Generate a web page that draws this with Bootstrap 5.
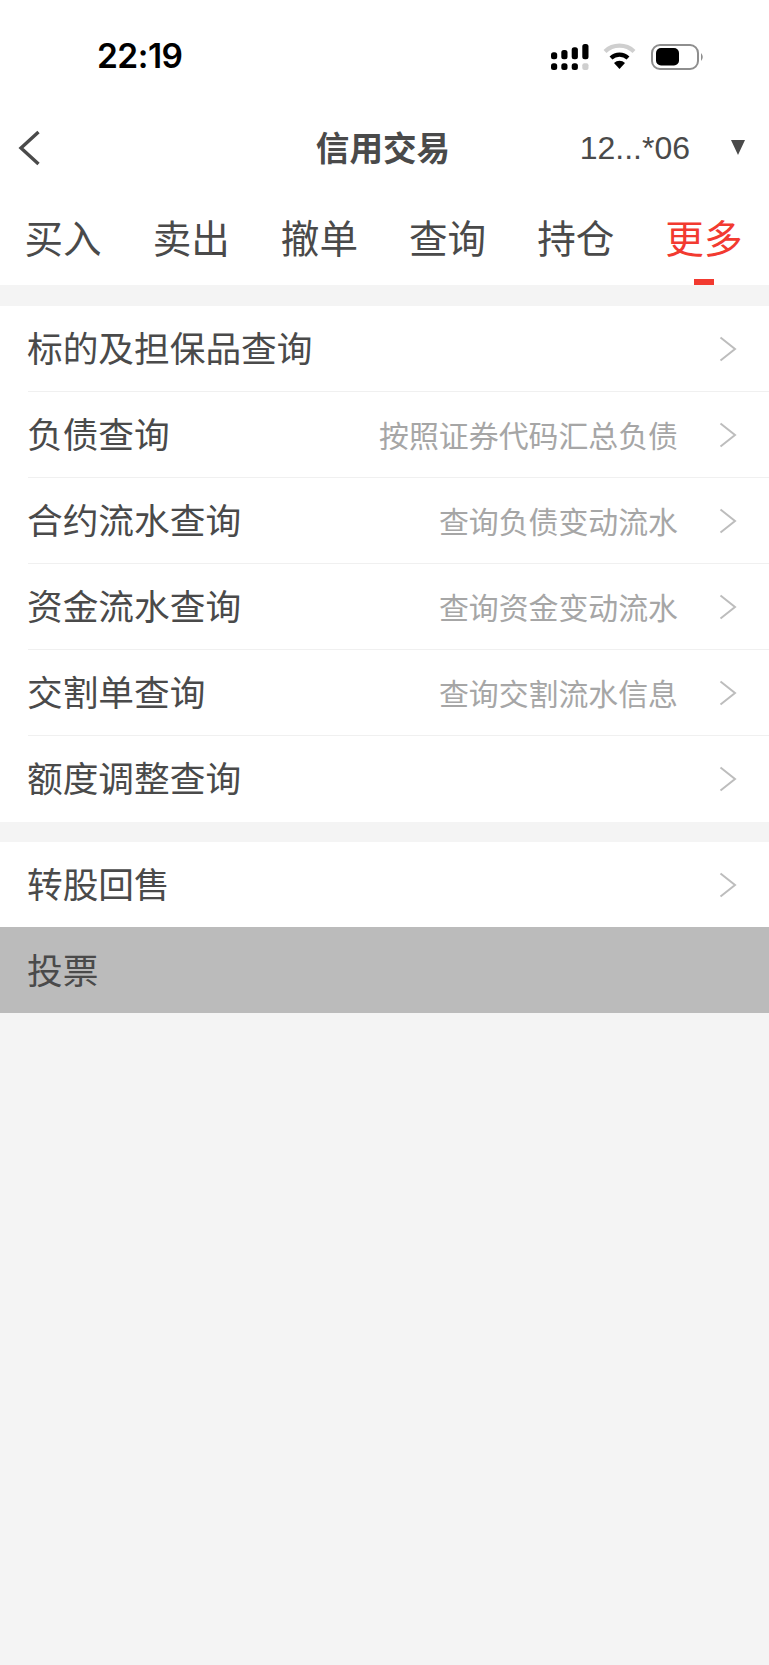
<!DOCTYPE html>
<html lang="zh-CN">
<head>
  <meta charset="utf-8" />
  <meta name="viewport" content="width=device-width, initial-scale=1" />
  <title>信用交易</title>
  <link href="https://cdn.jsdelivr.net/npm/bootstrap@5.3.3/dist/css/bootstrap.min.css" rel="stylesheet" />
  <style>
    body {
      background: #f4f4f4;
      color: #4a4a4a;
      font-family: "Noto Sans CJK SC", "Liberation Sans", sans-serif;
      min-height: 1665px;
    }
    .status-bar { height: 100px; padding: 0 65px 0 97px; }
    .status-time { font: 600 33.5px/1 Inter, "Liberation Sans", sans-serif; color: #000; margin-top: 14px; letter-spacing: -.5px; }
    .status-icons { margin-top: 14px; display: block; }
    .top-bar { height: 95px; padding: 0 24px 0 18px; }
    .top-side { flex: 1 1 0; }
    .top-title { font-size: 33.6px; font-weight: 700; line-height: 1; margin: -2px 0 0 3px; }
    .account { font: 400 32px/1 "Liberation Sans", sans-serif; margin-right: 41px; }
    .drop-mark { width: 0; height: 0; border-left: 7px solid transparent; border-right: 7px solid transparent; border-top: 15px solid #4a4a4a; }
    .trade-tabs { height: 90px; }
    .trade-tabs .nav-link {
      color: #4a4a4a;
      font-size: 38.6px;
      line-height: 1;
      padding: 22px 2px 0 0;
      height: 90px;
      position: relative;
    }
    .trade-tabs .nav-link.active { color: #f23a30; }
    .trade-tabs .nav-link.active::after {
      content: "";
      position: absolute;
      left: 50%;
      bottom: 0;
      width: 20px;
      height: 6px;
      margin-left: -11px;
      background: #f23a30;
    }
    .menu-group { margin-top: 21px; border-radius: 0; }
    .menu-group + .menu-group { margin-top: 20px; }
    .menu-row {
      height: 86px;
      padding: 0 32px 0 0;
      margin-left: 28px;
      border-color: #f0f0f0;
      background: transparent;
      color: #4a4a4a;
      font-size: 35.7px;
      line-height: 1;
    }
    .list-group-flush .menu-row { border-width: 0 0 1px; }
    .list-group-flush .menu-row:last-child { border-bottom-width: 0; }
    .menu-name { margin: 0 0 4px -1px; }
    .menu-hint { font-size: 29.9px; color: #a6a6a6; margin-left: auto; margin-right: 41px; }
    .menu-arrow { margin-left: auto; flex: none; }
    .menu-hint + .menu-arrow { margin-left: 0; }
    .menu-short .menu-row { height: 85px; }
    .menu-shaded { background: #bbbbbb; }
    .menu-shaded .menu-row { border: 0; }
    .menu-shaded .menu-name { margin-bottom: 2px; }
  </style>
</head>
<body>

  <div class="bg-white">
    <!-- status bar -->
    <div class="status-bar d-flex align-items-center justify-content-between">
      <div class="status-time">22:19</div>
      <svg class="status-icons" width="155" height="28" viewBox="549 43 155 28">
        <g fill="#000">
          <rect x="551" y="52.3" width="6.2" height="7" rx="2.5" />
          <rect x="561.3" y="50" width="6.2" height="9.3" rx="2.5" />
          <rect x="571.7" y="47.3" width="6.2" height="12" rx="2.5" />
          <rect x="582.3" y="44" width="6.2" height="15.3" rx="2.5" />
          <rect x="551" y="63.3" width="6.2" height="6.7" rx="2.5" />
          <rect x="561.3" y="63.3" width="6.2" height="6.7" rx="2.5" />
          <rect x="571.7" y="63.3" width="6.2" height="6.7" rx="2.5" />
          <rect x="582.3" y="63.3" width="6.2" height="6.7" rx="2" fill="#cfcfcf" />
        </g>
        <path d="M605 51.5 A21 21 0 0 1 634 51.5" fill="none" stroke="#cfcfcf" stroke-width="4.2" />
        <path d="M611 58 A12.5 12.5 0 0 1 628 58" fill="none" stroke="#000" stroke-width="4.2" />
        <path d="M614 63 L619.5 69 L625 63 A8 8 0 0 0 614 63 Z" fill="#000" />
        <rect x="652" y="45" width="46" height="24" rx="8" fill="none" stroke="#8e8e8e" stroke-width="2" />
        <rect x="656" y="48" width="23" height="17.5" rx="5" fill="#000" />
        <path d="M701 53 Q704.5 57 701 61 Z" fill="#8e8e8e" />
      </svg>
    </div>

    <!-- title row -->
    <div class="top-bar d-flex align-items-center">
      <div class="top-side d-flex">
        <svg width="23" height="36" viewBox="0 0 23 36">
          <path d="M20.5 2 L3 18 L20.5 34" fill="none" stroke="#4a4a4a" stroke-width="3.4" />
        </svg>
      </div>
      <div class="top-title">信用交易</div>
      <div class="top-side d-flex align-items-center justify-content-end">
        <span class="account">12...*06</span>
        <span class="drop-mark"></span>
      </div>
    </div>

    <!-- trade tabs -->
    <nav class="nav nav-fill trade-tabs">
      <a class="nav-link" href="#">买入</a>
      <a class="nav-link" href="#">卖出</a>
      <a class="nav-link" href="#">撤单</a>
      <a class="nav-link" href="#">查询</a>
      <a class="nav-link" href="#">持仓</a>
      <a class="nav-link active" href="#">更多</a>
    </nav>
  </div>

  <div class="list-group list-group-flush menu-group bg-white" id="queries"></div>

  <div class="menu-group bg-white">
    <div class="list-group list-group-flush menu-short" id="others"></div>
    <div class="list-group list-group-flush menu-shaded">
      <div class="list-group-item menu-row d-flex align-items-center"><span class="menu-name">投票</span></div>
    </div>
  </div>

  <script>
    const queries = [
      { name: "标的及担保品查询" },
      { name: "负债查询", hint: "按照证券代码汇总负债" },
      { name: "合约流水查询", hint: "查询负债变动流水" },
      { name: "资金流水查询", hint: "查询资金变动流水" },
      { name: "交割单查询", hint: "查询交割流水信息" },
      { name: "额度调整查询" },
    ];
    const others = [{ name: "转股回售" }];

    const arrow = `<svg class="menu-arrow" width="18" height="26" viewBox="0 0 18 26">
      <path d="M1.5 1.5 L16 13 L1.5 24.5" fill="none" stroke="#bdbdbd" stroke-width="2" />
    </svg>`;

    const renderRows = (list) =>
      list.map((val) => `
        <div class="list-group-item menu-row d-flex align-items-center">
          <span class="menu-name">${val.name}</span>
          ${val.hint ? `<span class="menu-hint">${val.hint}</span>` : ""}
          ${arrow}
        </div>`).join("");

    document.getElementById("queries").innerHTML = renderRows(queries);
    document.getElementById("others").innerHTML = renderRows(others);
  </script>

  <script src="https://cdn.jsdelivr.net/npm/bootstrap@5.3.3/dist/js/bootstrap.bundle.min.js"></script>
</body>
</html>
